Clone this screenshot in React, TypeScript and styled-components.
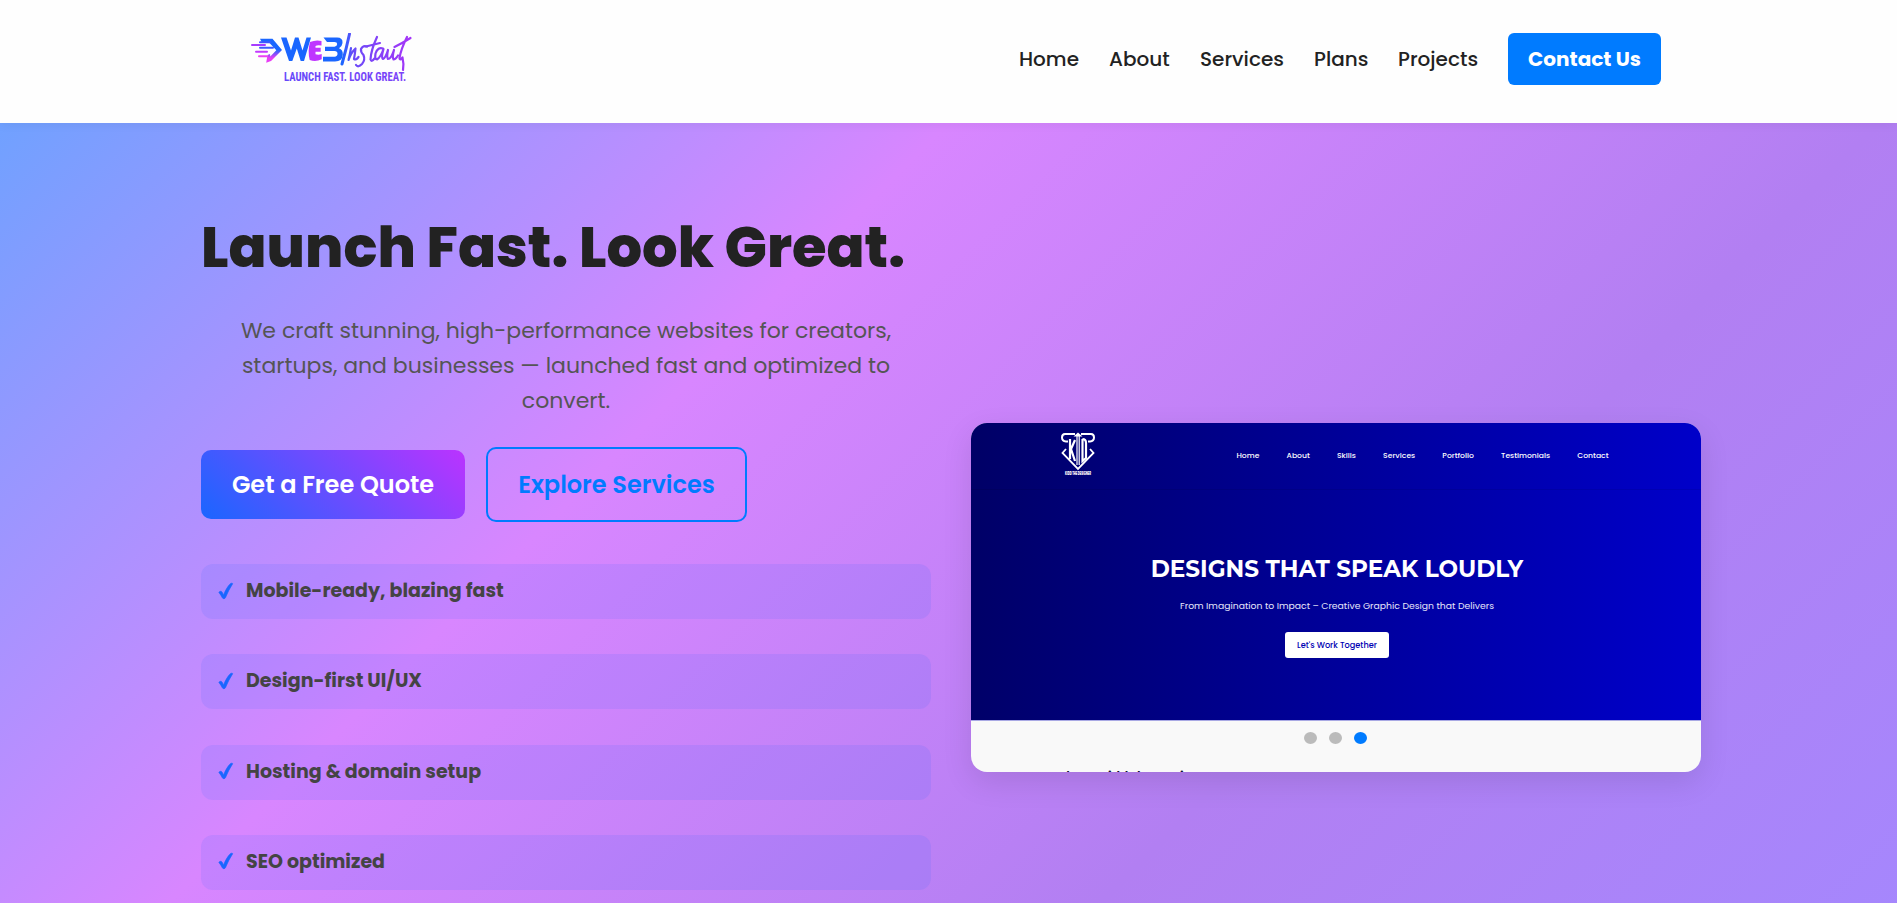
import React from 'react';
import styled, { createGlobalStyle } from 'styled-components';

const Global = createGlobalStyle`
  *{box-sizing:border-box}
  html,body{margin:0;height:100%;overflow:hidden}
  body{font-family:Poppins,Inter,"Liberation Sans",sans-serif;background:#fff;color:#222}
  h1,h2,p,ul{margin:0;padding:0}
`;

const Line = styled.span`white-space:nowrap;`;

const Page = styled.div`height:903px;overflow:hidden;display:flex;flex-direction:column;`;

const Header = styled.header`
  height:122.5px;flex:none;background:#fefefe;display:flex;justify-content:space-between;
  align-items:flex-start;padding:33px 236px 0 250px;
  position:relative;z-index:1;box-shadow:0 2px 10px rgba(0,0,0,.05);
`;
const Nav = styled.nav`display:flex;align-items:center;height:52px;gap:30px;`;
const NavLink = styled.a<{ $w: number }>`
  font-size:20px;font-weight:500;color:#222;width:${p => p.$w}px;white-space:nowrap;
`;
const Contact = styled.a`
  width:153px;height:52px;border-radius:6px;background:#007bff;color:#fff;font-size:20px;font-weight:700;
  display:flex;align-items:center;justify-content:center;white-space:nowrap;
`;

const Hero = styled.main`
  flex:none;height:950px;padding-left:5px;
  background:linear-gradient(135deg,#70a1ff 0%,#d886ff 33.3%,#b27ff2 66%,#a388ff 100%);
  display:grid;grid-template-columns:730px 730px;column-gap:40px;justify-content:center;align-items:start;
`;
const Left = styled.section`padding-top:85px;`;
const Title = styled.h1`font-size:56px;font-weight:800;line-height:80px;white-space:nowrap;color:#222;`;
const Lead = styled.p`
  margin-top:25px;font-size:22px;line-height:35.2px;color:#555;text-align:center;
  display:flex;flex-direction:column;align-items:center;
`;
const Actions = styled.div`margin-top:28.500px;display:flex;align-items:center;gap:21px;`;
const Button = styled.a<{ $outline?: boolean }>`
  display:flex;align-items:center;justify-content:center;font-size:24px;font-weight:600;border-radius:10px;white-space:nowrap;
  ${p => p.$outline
    ? 'width:261px;height:75px;border:2px solid #007bff;color:#007bff;'
    : 'width:264px;height:69px;color:#fff;background:linear-gradient(45deg,#1a66ff,#bb33ff);'}
`;
const Features = styled.ul`list-style:none;margin-top:42.400px;display:flex;flex-direction:column;gap:35.300px;`;
const Feature = styled.li`
  height:55px;border-radius:12px;background:rgba(26,102,255,.1);display:flex;align-items:center;
  padding:0 17px 2px;gap:12px;font-size:19px;font-weight:700;color:#444;
  svg{flex:none}
`;

const Card = styled.section`
  margin-top:300px;height:349px;border-radius:16px;overflow:hidden;background:#f9f9f9;
  box-shadow:0 10px 30px rgba(0,0,0,.1);
`;
const Slide = styled.div`
  height:298px;background:linear-gradient(94deg,#000066,#0000cc);color:#fff;display:flex;flex-direction:column;align-items:center;
  border-bottom:1px solid #a9a9e4;
`;
const SlideNav = styled.div`
  width:100%;height:67px;display:flex;align-items:center;justify-content:space-between;padding:0 92.500px 0 90px;
  border-bottom:1px solid rgba(0,0,0,.08);
  svg{align-self:flex-start;margin-top:9px}
`;
const SlideLinks = styled.div`display:flex;gap:27.200px;font-size:7.650px;font-weight:500;`;
const SlideTitle = styled.h2`
  margin-top:63px;padding-left:2px;font-size:23.150px;line-height:32px;font-weight:700;white-space:nowrap;font-family:Montserrat,Inter,sans-serif;
`;
const SlideText = styled.p`margin-top:13px;padding-left:2px;font-size:9.280px;line-height:16px;white-space:nowrap;color:#e6e6fa;`;
const SlideButton = styled.a`
  margin:18.500px 0 0 2px;width:104px;height:26px;border-radius:3px;background:#fff;color:#0000b3;font-size:8.200px;font-weight:500;
  display:flex;align-items:center;justify-content:center;
`;
const Dots = styled.div`height:50px;padding:11px 2px 0 0;display:flex;justify-content:center;gap:12px;`;
const Dot = styled.i<{ $on?: boolean }>`width:13px;height:12px;border-radius:50%;background:${p => (p.$on ? '#007bff' : '#bbb')};`;
const Peek = styled.div`padding-left:86px;font:700 12px/12px Montserrat,sans-serif;color:#113;`;

const Check = () => (
  <svg width="16" height="18" viewBox="0 0 16 18">
    <path d="M.9 10.500c.5-1.400 2.500-1.700 3.300-.3l1.400 2.700C7.300 8.500 9.600 4.200 12.500 1.600c.8-.7 2.500-.6 2.100.3C12 6 9.500 10.500 7.600 15.500c-.6 1.500-2.700 1.600-3.300.3C3.300 13.800 2.200 12 .9 10.500z" fill="#1a66ff" stroke="#1a66ff" strokeWidth=".6" strokeLinejoin="round" />
  </svg>
);

const Logo = () => (
  <svg width="165" height="52" viewBox="0 0 165 52">
    <defs>
      <linearGradient id="arrow" x1="0" y1="0" x2="0" y2="1">
        <stop offset=".45" stopColor="#1a66ff" /><stop offset=".8" stopColor="#e83df5" />
      </linearGradient>
      <linearGradient id="script" gradientUnits="userSpaceOnUse" x1="92" y1="0" x2="163" y2="0">
        <stop offset="0" stopColor="#1a66ff" /><stop offset=".16" stopColor="#6a4af8" /><stop offset="1" stopColor="#a835f8" />
      </linearGradient>
      <linearGradient id="tag" x1="0" y1="0" x2="1" y2="0">
        <stop offset="0" stopColor="#6548fa" /><stop offset="1" stopColor="#7c43f8" />
      </linearGradient>
    </defs>
    <path d="M10 5.800h12.500L32 17 21 28l-4.800 1.700 1.300-7.700 2.500-1 .3 2.500 6-6.300-7-7.500H12z" fill="url(#arrow)" />
    <g strokeWidth="2" strokeLinecap="round" fill="none">
      <path d="M2 12h13" stroke="#a63cff" /><path d="M10 14.800h13M10 9.200h10" stroke="#3d5aff" />
      <path d="M6 18.800h11" stroke="#c43aff" /><path d="M9 23.200h8" stroke="#ee42f4" />
    </g>
    <g transform="translate(0 3.500)">
      <path d="M31 1h5.500l4.500 13L45 1h3.500l4 13L56.500 1H61L54 24.500h-3.300L46.800 12l-4.500 12.500H39z" fill="#1a66ff" />
      <path d="M60 5.500q6-2.500 11.500-1v4.500q-4-.8-6 .4v1.800h5.200v4h-5.200v2.600q3 1 6.200-.2v5.200q-6 2.800-12 .7-2.200-9 .3-18z" fill="#bf35ff" />
      <path d="M73.500 1h13.500q6 0 5.500 5.500-.4 3.700-3.500 5.300 4 1.500 3.800 6.200Q92.300 25 85 25H73v-4.800h11.500q3-.4 3-3t-3-2.600H75v-4.400h9.500q2.700-.6 2.700-2.600T84.500 5.600H77z" fill="#1a66ff" />
    </g>
    <g fill="none" stroke="url(#script)" strokeWidth="2.200" strokeLinecap="round" strokeLinejoin="round">
      <path d="M99.500 1q-3 14-7.500 30" strokeWidth="3" />
      <path d="M101 15q-1 6-2.500 12 3-8 7-11.500-.5 5-1.500 10.500 2 1.500 4.500-2" />
      <path d="M117 13.500q-4-1.500-6 2.500-.5 3 2.500 6 2 5-1.500 9-4 4-6 1" />
      <path d="M127 4q-6 13-6.500 22.500 1 3 4-1M116 13.500q8-2 14-3.500" />
      <path d="M133 15.500q-5-2-7.500 5-1 6 1.500 6 3.500-2 6.500-10.500-2.500 9-.5 10 2.500-1 5-9-1.500 7 0 9 3 0 6-9-2 7-.5 9.500 2 0 4.500-4" />
      <path d="M157 4q-6 12-7.500 21 .5 3 3-.5 1.500 6 .5 12.500M144.500 14q8-4 16-9" />
    </g>
    <text x="34" y="48" fontFamily="'Roboto Condensed',Roboto,'Liberation Sans',sans-serif" fontWeight="700" fontSize="12.200" textLength="122" lengthAdjust="spacingAndGlyphs" fill="url(#tag)">LAUNCH FAST. LOOK GREAT.</text>
  </svg>
);

const KidLogo = () => (
  <svg width="34" height="44" viewBox="0 0 34 44" fill="none" stroke="#fff">
    <path d="M14 2H4Q1 2 1 5.500T5 9.500h2M20 2h10q3 0 3 3.500t-4 4h-2" strokeWidth="2" />
    <path d="M5 17l-3.500 4L17 37l15.500-16L29 17" strokeWidth="1.800" />
    <path d="M9 7v20M14 8l-4 9 4 12" strokeWidth="2.200" />
    <path d="M16 4v29M18.200 4v29" strokeWidth="1.200" />
    <path d="M21.500 7v22l3.500-3V11q0-4-3.500-4" strokeWidth="2.200" />
    <path d="M17 .5l4.500 4h-9z" fill="#fff" stroke="none" />
    <text x="4" y="42.500" fontSize="4.500" fontWeight="800" fill="#fff" stroke="none" textLength="26" lengthAdjust="spacingAndGlyphs">KIDD THE DESIGNER</text>
  </svg>
);

const links = [
  { label: 'Home', w: 60 },
  { label: 'About', w: 61 },
  { label: 'Services', w: 84 },
  { label: 'Plans', w: 54 },
  { label: 'Projects', w: 80 },
];
const features = ['Mobile-ready, blazing fast', 'Design-first UI/UX', 'Hosting & domain setup', 'SEO optimized'];
const slideLinks = ['Home', 'About', 'Skills', 'Services', 'Portfolio', 'Testimonials', 'Contact'];

export default function App() {
  return (
    <Page>
      <Global />
      <Header>
        <Logo />
        <Nav>
          {links.map(l => <NavLink key={l.label} $w={l.w}>{l.label}</NavLink>)}
          <Contact>Contact Us</Contact>
        </Nav>
      </Header>
      <Hero>
        <Left>
          <Title>Launch Fast. Look Great.</Title>
          <Lead>
            <Line>We craft stunning, high-performance websites for creators,</Line>
            <Line>startups, and businesses — launched fast and optimized to</Line>
            <Line>convert.</Line>
          </Lead>
          <Actions>
            <Button>Get a Free Quote</Button>
            <Button $outline>Explore Services</Button>
          </Actions>
          <Features>
            {features.map(f => <Feature key={f}><Check />{f}</Feature>)}
          </Features>
        </Left>
        <Card>
          <Slide>
            <SlideNav>
              <KidLogo />
              <SlideLinks>{slideLinks.map(s => <span key={s}>{s}</span>)}</SlideLinks>
            </SlideNav>
            <SlideTitle>DESIGNS THAT SPEAK LOUDLY</SlideTitle>
            <SlideText>From Imagination to Impact – Creative Graphic Design that Delivers</SlideText>
            <SlideButton>Let's Work Together</SlideButton>
          </Slide>
          <Dots><Dot /><Dot /><Dot $on /></Dots>
          <Peek>About Kidd the Designer</Peek>
        </Card>
      </Hero>
    </Page>
  );
}
